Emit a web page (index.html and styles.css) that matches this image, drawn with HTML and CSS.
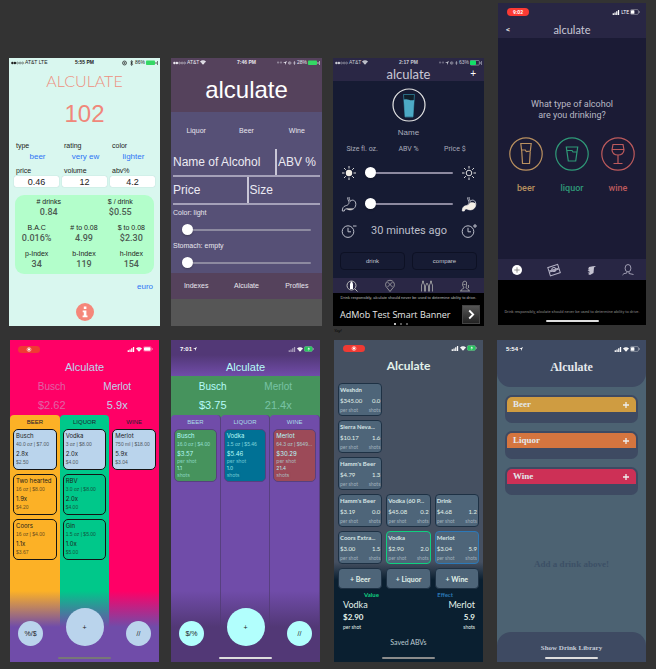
FILE: index.html
```
<!DOCTYPE html>
<html lang="en">
<head>
<meta charset="utf-8">
<title>Alculate design history</title>
<link rel="stylesheet" href="styles.css">
</head>
<body>
<svg class="defs" aria-hidden="true">
  <symbol id="dots" viewBox="0 0 14 4"><g fill="currentColor"><circle cx="1.5" cy="2" r="1.3"/><circle cx="4.2" cy="2" r="1.3"/></g><g fill="none" stroke="currentColor" stroke-width=".5"><circle cx="7" cy="2" r="1"/><circle cx="9.8" cy="2" r="1"/><circle cx="12.5" cy="2" r="1"/></g></symbol>
  <symbol id="wifi" viewBox="0 0 8 6"><path d="M0 1.8Q4-1.6 8 1.8L4 6Z" fill="currentColor"/><path d="M1.4 3Q4 .9 6.6 3" fill="none" stroke="#0004" stroke-width=".6"/></symbol>
  <symbol id="bars" viewBox="0 0 8 6"><path d="M0 4h1.5v2H0zM2.1 3h1.5v3H2.1zM4.2 1.5h1.5V6H4.2zM6.3 0h1.5v6H6.3z" fill="currentColor"/></symbol>
  <symbol id="misc" viewBox="0 0 12 6"><g fill="none" stroke="currentColor" stroke-width=".7"><circle cx="2.5" cy="3" r="2"/><circle cx="2.5" cy="3" r=".7"/><path d="M8.6 1.6l2 2.7-1 1.2v-5l1 1.2-2 2.7"/></g></symbol>
  <symbol id="battery-full" viewBox="0 0 12 6"><rect y=".5" width="9" height="4.6" rx=".8" fill="#34d864"/><path d="M10 2v2" stroke="currentColor" stroke-width=".7"/><path d="M11.5 1v4" stroke="currentColor" stroke-width=".6"/></symbol>
  <symbol id="battery-part" viewBox="0 0 12 6"><rect x=".3" y=".5" width="9" height="4.6" rx=".8" fill="none" stroke="currentColor" stroke-width=".5"/><rect y=".5" width="6" height="4.6" rx=".8" fill="#12e068"/><path d="M10.2 2v2M11.6 1v4" stroke="currentColor" stroke-width=".6"/></symbol>
  <symbol id="battery-white" viewBox="0 0 10 6"><rect x=".4" y=".6" width="8" height="4.8" rx="1.2" fill="none" stroke="currentColor" stroke-width=".4" opacity=".6"/><rect x="1" y="1.2" width="6.6" height="3.6" rx=".7" fill="currentColor"/><path d="M9.3 2.2v1.6" stroke="currentColor" stroke-width=".5"/></symbol>
  <symbol id="battery-half" viewBox="0 0 10 6"><rect x=".4" y=".6" width="8" height="4.8" rx="1.2" fill="none" stroke="currentColor" stroke-width=".5" opacity=".7"/><rect x="1" y="1.2" width="3.4" height="3.6" rx=".6" fill="currentColor"/><path d="M9.3 2.2v1.6" stroke="currentColor" stroke-width=".5"/></symbol>
  <symbol id="battery-green" viewBox="0 0 10 6"><rect x=".4" y=".6" width="8" height="4.8" rx="1.2" fill="#25c45c" stroke="#8fd7a8" stroke-width=".4"/><path d="M5.2 1L3.4 3.3h1.4L4.2 5l2-2.4H4.7z" fill="#fff"/><path d="M9.3 2.2v1.6" stroke="currentColor" stroke-width=".5"/></symbol>
  <symbol id="arrow" viewBox="0 0 5 5"><path d="M5 0L0 2.4h2.5V5z" fill="currentColor"/></symbol>
  <symbol id="record" viewBox="0 0 6 6"><circle cx="3" cy="3" r="2.4" fill="none" stroke="#fff" stroke-width=".6"/><circle cx="3" cy="3" r="1.4" fill="#fff"/></symbol>
  <symbol id="clock" viewBox="0 0 16 16"><circle cx="7" cy="8.6" r="5.8" fill="none" stroke="currentColor"/><path d="M7 4.8v4h3" fill="none" stroke="currentColor"/></symbol>
  <symbol id="stomach" viewBox="0 0 16 16"><path d="M8 1c0 2 1.200 3 1 4.500C11 3 15 4 14.800 8.500 14.500 13 10 15 6.500 13.200 4.500 12.500 3.600 13 3.300 15H1.300c0-3 1-4.600 3.200-5.200C8 9 8.300 7 7.800 5.500 7.400 4 6.500 3 6.500 1.500" stroke="currentColor" stroke-width=".9" stroke-linejoin="round"/></symbol>
</svg>

<main class="board">
  <!-- 1: first prototype -->
  <section class="phone short mint">
    <div class="status">
      <span><svg class="i14"><use href="#dots"/></svg> AT&amp;T LTE</span><b>5:55 PM</b>
      <span><svg class="i12"><use href="#misc"/></svg>86% <svg class="i12"><use href="#battery-full"/></svg></span>
    </div>
    <h1>ALCULATE</h1>
    <output class="score">102</output>
    <dl class="picks">
      <div><dt>type</dt><dd><button>beer</button></dd></div>
      <div><dt>rating</dt><dd><button>very ew</button></dd></div>
      <div><dt>color</dt><dd><button>lighter</button></dd></div>
    </dl>
    <form class="fields">
      <label for="price">price</label><label for="volume">volume</label><label for="abv">abv%</label>
      <input id="price" value="0.46"><input id="volume" value="12"><input id="abv" value="4.2">
    </form>
    <div class="results">
      <dl class="two"><div><dt># drinks</dt><dd>0.84</dd></div><div><dt>$ / drink</dt><dd>$0.55</dd></div></dl>
      <dl><div><dt>B.A.C</dt><dd>0.016%</dd></div><div><dt># to 0.08</dt><dd>4.99</dd></div><div><dt>$ to 0.08</dt><dd>$2.30</dd></div></dl>
      <dl><div><dt>p-Index</dt><dd>34</dd></div><div><dt>b-Index</dt><dd>119</dd></div><div><dt>h-Index</dt><dd>154</dd></div></dl>
    </div>
    <button class="euro">euro</button>
    <button class="info" aria-label="Information"><svg viewBox="0 0 18 18"><circle cx="9" cy="9" r="9" fill="#f5877a"/><path d="M7.800 3.500h2.600v2.600H7.800zM6.700 7.400h3.700v5h1.100v1.800H6.600v-1.800h1.200V9.200H6.700z" fill="#fff"/></svg></button>
  </section>

  <!-- 2: purple form -->
  <section class="phone short plum">
    <header>
      <div class="status">
        <span><svg class="i14"><use href="#dots"/></svg> AT&amp;T <svg class="i6"><use href="#wifi"/></svg></span><b>7:46 PM</b>
        <span><svg class="i5"><use href="#misc"/></svg><svg class="i4"><use href="#arrow"/></svg><svg class="i12 tight"><use href="#misc"/></svg>28% <svg class="i12"><use href="#battery-full"/></svg></span>
      </div>
      <h1>alculate</h1>
    </header>
    <nav class="thirds kinds"><button>Liquor</button><button>Beer</button><button>Wine</button></nav>
    <form>
      <div class="line name-abv"><input placeholder="Name of Alcohol" aria-label="Name of Alcohol"><input placeholder="ABV %" aria-label="ABV %"></div>
      <div class="line"><input placeholder="Price" aria-label="Price"><input placeholder="Size" aria-label="Size"></div>
      <label for="tone">Color: light</label>
      <input class="slider" id="tone" type="range" value="0">
      <label for="stomach-a">Stomach: empty</label>
      <input class="slider" id="stomach-a" type="range" value="0">
    </form>
    <nav class="thirds foot"><button>Indexes</button><button>Alculate</button><button>Profiles</button></nav>
  </section>

  <!-- 3: navy form with ad -->
  <figure class="with-caption">
    <section class="phone short navy">
      <header>
        <div class="status">
          <span><svg class="i14"><use href="#dots"/></svg> AT&amp;T <svg class="i6"><use href="#wifi"/></svg></span><b>2:17 PM</b>
          <span><svg class="i5"><use href="#misc"/></svg><svg class="i4"><use href="#arrow"/></svg><svg class="i12 tight"><use href="#misc"/></svg>63% <svg class="i12"><use href="#battery-part"/></svg></span>
        </div>
        <div class="bar"><h1>alculate</h1><button aria-label="Add">+</button></div>
      </header>
      <svg class="glass" viewBox="0 0 34 34"><circle cx="17" cy="17" r="16" fill="none" stroke="#e4e4e4" stroke-width="1.200"/><path d="M11.500 6.500h11L21 29h-8z" fill="#10202c" stroke="#2f7f98" stroke-width=".8"/><path d="M11.800 11.500q2.600-.8 5 .2t5.400.3L21 28.800h-8z" fill="#4daac6"/></svg>
      <input class="drink-name" placeholder="Name" aria-label="Name">
      <div class="thirds specs"><input placeholder="Size fl. oz." aria-label="Size fl. oz."><input placeholder="ABV %" aria-label="ABV %"><input placeholder="Price $" aria-label="Price $"></div>
      <div class="row sun">
        <svg viewBox="0 0 16 16"><circle cx="8" cy="8" r="3.200" fill="#f4efe6"/><path d="M8 1v2.500M8 12.500V15M1 8h2.500M12.500 8H15M3 3l1.800 1.800M11.200 11.200L13 13M3 13l1.800-1.800M11.200 4.800L13 3" stroke="#ddd"/></svg>
        <input class="slider" type="range" value="0" aria-label="Color">
        <svg viewBox="0 0 16 16"><circle cx="8" cy="8" r="2.800" fill="none" stroke="#ddd"/><path d="M8 1v2.500M8 12.500V15M1 8h2.500M12.500 8H15M3 3l1.800 1.800M11.200 11.200L13 13M3 13l1.800-1.800M11.200 4.800L13 3" stroke="#ddd"/></svg>
      </div>
      <div class="row belly">
        <svg viewBox="0 0 16 16" fill="none"><use href="#stomach"/><path d="M5 12.500h7.500Q9 15 5 12.500" fill="#f4efe6"/></svg>
        <input class="slider" type="range" value="0" aria-label="Stomach">
        <svg viewBox="0 0 16 16"><use href="#stomach" fill="none"/><path d="M9 6.500q3-1 5.700 1Q15 13 10 14q-2 .300-4.200-1Q3.600 12.500 3.300 15h-2c0-3 1-4.800 3.200-5.200 2.200-.3 3.600-1.500 4.500-3.300" fill="#f4efe6"/></svg>
      </div>
      <div class="row time">
        <button aria-label="Earlier"><svg viewBox="0 0 16 16"><use href="#clock"/><path d="M12 3h3.500" stroke="currentColor"/></svg></button>
        <span>30 minutes ago</span>
        <button aria-label="Later"><svg viewBox="0 0 16 16"><use href="#clock"/><path d="M12 3h4M14 1v4" stroke="currentColor"/></svg></button>
      </div>
      <div class="actions"><button>drink</button><button>compare</button></div>
      <nav class="tabs">
        <button aria-label="Calculate"><svg viewBox="0 0 12 12"><circle cx="5.500" cy="5.500" r="4.500" fill="none" stroke="#bbb"/><path d="M5 1.500h1L7 4v5H4V4z" fill="#fff"/><path d="M9 9l2.500 2.500" stroke="#bbb"/></svg></button>
        <button aria-label="Places"><svg viewBox="0 0 12 12" fill="none" stroke="#aaa" stroke-width=".8"><path d="M6 11.500L2 6.500a4.400 4.400 0 1 1 8 0z"/><path d="M3.500 2l5 5M8.500 2l-5 5"/></svg></button>
        <button aria-label="Drinks"><svg viewBox="0 0 12 12" fill="none" stroke="#aaa" stroke-width=".8"><path d="M.5 11.500V5l1-2V1h1v2l1 2v6.500M4.500 11.500V6L6 3l1.500 3v5.500M8.500 11.500V5l1-2V1h1v2l1 2v6.500"/></svg></button>
        <button aria-label="Profile"><svg viewBox="0 0 12 12" fill="none" stroke="#aaa" stroke-width=".8"><path d="M1 11h10M2 11c0-2 2-2 3-3L3.500 5 4 2l2-1 1.500 1v3L7 8c1 1 3 1 3 3M9.500 5v3M4.500 4.500h2"/></svg></button>
      </nav>
      <footer>
        <small>Drink responsibly, alculate should never be used to determine ability to drive.</small>
        <div class="ad"><span>AdMob Test Smart Banner</span><button aria-label="Open"><svg viewBox="0 0 18 19"><path d="M7 5l4.500 4.500L7 14" fill="none" stroke="#fff" stroke-width="2"/></svg></button></div>
        <div class="pager"><i></i><i></i><i></i></div>
      </footer>
    </section>
    <figcaption>Yay!</figcaption>
  </figure>

  <!-- 4: drink type chooser -->
  <section class="phone tall picker">
    <header>
      <div class="notch"><span class="pill">9:02</span><span class="signals"><svg class="i8"><use href="#bars"/></svg>LTE<svg class="i10"><use href="#battery-half"/></svg></span></div>
      <div class="bar"><button aria-label="Back">&lt;</button><h1>alculate</h1></div>
    </header>
    <p class="ask">What type of alcohol<br>are you drinking?</p>
    <div class="choices">
      <button class="c-beer"><svg viewBox="0 0 34 34"><circle cx="17" cy="17" r="16.200"/><path d="M11.800 6.500h10.400l-1 8.500-.7 11.500h-7L12.800 15zM12.300 13h4l1 1.500 4.500-.5"/></svg>beer</button>
      <button class="c-liquor"><svg viewBox="0 0 34 34"><circle cx="17" cy="17" r="16.200"/><path d="M11.300 10h11.400l-2 14h-7.400zM12 13.500h5l1 1.500h4"/></svg>liquor</button>
      <button class="c-wine"><svg viewBox="0 0 34 34"><circle cx="17" cy="17" r="16.200"/><path d="M12 7.500h10l1 5.500q-.5 5-6 5t-6-5zM11.500 12.500h11.200M17 18v8M12.500 26.500h9"/></svg>wine</button>
    </div>
    <nav class="tabs">
      <button aria-label="Add"><svg viewBox="0 0 12 12"><circle cx="6" cy="6" r="5" fill="#fff"/><path d="M6 3.300v5.400M3.300 6h5.400" stroke="#777" stroke-width=".8"/></svg></button>
      <button aria-label="Value"><svg viewBox="0 0 12 12" fill="none" stroke="#b5b3c6"><g transform="rotate(-18 6 6)"><rect x=".8" y="1.800" width="10.400" height="3.800"/><rect x=".8" y="6.600" width="10.400" height="3.800"/><circle cx="6" cy="5.500" r="2"/></g></svg></button>
      <button aria-label="Effect"><svg viewBox="0 0 12 12"><path d="M4 3q4-1 7-1L9 3.500 8.500 9 5 11l-2-1 2-1.500H2.500L5 7H2.500L4.500 5.500H3z" fill="#c4c2d0"/></svg></button>
      <button aria-label="Profile"><svg viewBox="0 0 12 12" fill="none" stroke="#a9a7bb" stroke-width=".9"><ellipse cx="6" cy="4.200" rx="2.900" ry="3.700"/><path d="M.5 11q1-2 4-1.800L5 7.800M7 8v1.500l4.500 1"/></svg></button>
    </nav>
    <footer><small>Drink responsibly, alculate should never be used to determine ability to drive.</small><i class="home"></i></footer>
  </section>

  <!-- 5: colour columns -->
  <section class="phone tall lanes pink">
    <header>
      <div class="notch"><span class="pill"><svg class="i6"><use href="#record"/></svg></span><span class="signals"><svg class="i8"><use href="#bars"/></svg><svg class="i6"><use href="#wifi"/></svg><svg class="i10"><use href="#battery-white"/></svg></span></div>
      <h1>Alculate</h1>
    </header>
    <div class="versus"><div class="dim"><span>Busch</span><b>$2.62</b></div><div><span>Merlot</span><b>5.9x</b></div></div>
    <div class="columns">
      <section class="beer"><h2>BEER</h2>
        <article class="best"><h3>Busch</h3><small>40.0 oz | $7.00</small><b>2.8x</b><small>$2.50</small></article>
        <article><h3>Two hearted</h3><small>16 oz | $8.00</small><b>1.9x</b><small>$4.20</small></article>
        <article><h3>Coors</h3><small>16 oz | $4.00</small><b>1.1x</b><small>$3.67</small></article>
      </section>
      <section class="liquor"><h2>LIQUOR</h2>
        <article class="best"><h3>Vodka</h3><small>3 oz | $8.00</small><b>2.0x</b><small>$4.00</small></article>
        <article><h3>RBV</h3><small>3.0 oz | $8.00</small><b>2.0x</b><small>$4.00</small></article>
        <article><h3>Gin</h3><small>1.5 oz | $5.00</small><b>1.0x</b><small>$5.00</small></article>
      </section>
      <section class="wine"><h2>WINE</h2>
        <article class="best"><h3>Merlot</h3><small>750 ml | $18.00</small><b>5.9x</b><small>$3.04</small></article>
      </section>
    </div>
    <div class="dock"><div class="rounds"><button>%/$</button><button class="big">+</button><button>//</button></div><i class="home"></i></div>
  </section>

  <!-- 6: muted columns -->
  <section class="phone tall lanes violet">
    <header>
      <div class="notch"><span class="hour">7:01 <svg class="i4"><use href="#arrow"/></svg></span><span class="signals"><svg class="i8 faint"><use href="#bars"/></svg><svg class="i6"><use href="#wifi"/></svg><svg class="i10"><use href="#battery-green"/></svg></span></div>
      <h1>Alculate</h1>
    </header>
    <div class="versus"><div><span>Busch</span><b>$3.75</b></div><div class="dim"><span>Merlot</span><b>21.4x</b></div></div>
    <div class="columns">
      <section class="beer"><h2>BEER</h2>
        <article><h3>Busch</h3><small>16.0 oz | $4.00</small><b>$3.57</b><em>per shot</em><em class="n">1.1</em><em>shots</em></article>
      </section>
      <section class="liquor"><h2>LIQUOR</h2>
        <article><h3>Vodka</h3><small>1.5 oz | $5.46</small><b>$5.46</b><em>per shot</em><em class="n">1.0</em><em>shots</em></article>
      </section>
      <section class="wine"><h2>WINE</h2>
        <article><h3>Merlot</h3><small>64.3 oz | $649...</small><b>$30.29</b><em>per shot</em><em class="n">21.4</em><em>shots</em></article>
      </section>
    </div>
    <div class="dock"><div class="rounds"><button>$/%</button><button class="big">+</button><button>//</button></div><i class="home"></i></div>
  </section>

  <!-- 7: slate grid -->
  <section class="phone tall slate">
    <header>
      <div class="notch"><span class="pill"><svg class="i6"><use href="#record"/></svg></span><span class="signals"><svg class="i8"><use href="#bars"/></svg><svg class="i6"><use href="#wifi"/></svg><svg class="i10"><use href="#battery-green"/></svg></span></div>
      <h1>Alculate</h1>
    </header>
    <div class="cards">
      <article class="first"><h3>Weshdn</h3><p><b>$345.00</b><b>0.0</b></p><p><small>per shot</small><small>shots</small></p></article>
      <article class="first"><h3>Sierra Neva...</h3><p><b>$10.17</b><b>1.6</b></p><p><small>per shot</small><small>shots</small></p></article>
      <article class="first"><h3>Hamm's Beer</h3><p><b>$4.79</b><b>1.3</b></p><p><small>per shot</small><small>shots</small></p></article>
      <article class="first"><h3>Hamm's Beer</h3><p><b>$3.19</b><b>0.0</b></p><p><small>per shot</small><small>shots</small></p></article>
      <article><h3>Vodka (60 P...</h3><p><b>$45.08</b><b>0.2</b></p><p><small>per shot</small><small>shots</small></p></article>
      <article><h3>Drink</h3><p><b>$4.68</b><b>1.2</b></p><p><small>per shot</small><small>shots</small></p></article>
      <article class="first"><h3>Coors Extra...</h3><p><b>$3.00</b><b>1.5</b></p><p><small>per shot</small><small>shots</small></p></article>
      <article class="value"><h3>Vodka</h3><p><b>$2.90</b><b>2.0</b></p><p><small>per shot</small><small>shots</small></p></article>
      <article class="effect"><h3>Merlot</h3><p><b>$3.04</b><b>5.9</b></p><p><small>per shot</small><small>shots</small></p></article>
      <button>+ Beer</button><button>+ Liquor</button><button>+ Wine</button>
    </div>
    <div class="winners">
      <div><h4>Value</h4><span>Vodka</span><b>$2.90</b><small>per shot</small></div>
      <div class="right"><h4>Effect</h4><span>Merlot</span><b>5.9</b><small>shots</small></div>
    </div>
    <button class="saved">Saved ABVs</button>
    <i class="home"></i>
  </section>

  <!-- 8: slab accordion -->
  <section class="phone tall slab">
    <header>
      <div class="notch"><span class="hour">5:54 <svg class="i4"><use href="#arrow"/></svg></span><span class="signals"><svg class="i8"><use href="#bars"/></svg><svg class="i6"><use href="#wifi"/></svg><svg class="i10"><use href="#battery-half"/></svg></span></div>
      <h1>Alculate</h1>
    </header>
    <div class="drawers">
      <div class="drawer"><button class="d-beer">Beer<svg viewBox="0 0 8 8"><path d="M4 1v6M1 4h6"/></svg></button></div>
      <div class="drawer"><button class="d-liquor">Liquor<svg viewBox="0 0 8 8"><path d="M4 1v6M1 4h6"/></svg></button></div>
      <div class="drawer"><button class="d-wine">Wine<svg viewBox="0 0 8 8"><path d="M4 1v6M1 4h6"/></svg></button></div>
    </div>
    <p class="empty">Add a drink above!</p>
    <footer><button>Show Drink Library</button><i class="home"></i></footer>
  </section>
</main>
</body>
</html>
```
FILE: styles.css
```
* { box-sizing: border-box; }
body { margin: 0; background: #333; font-family: "Liberation Sans", Arial, sans-serif; }
h1, h2, h3, h4, p, dl, dd, figure { margin: 0; font-weight: 400; }
button, input { margin: 0; padding: 0; border: 0; background: none; color: inherit; font: inherit; min-width: 0; border-radius: 0; }
input { width: 100%; }
svg { display: block; flex: none; overflow: visible; }
.defs { width: 0; height: 0; position: absolute; }
small, b, em { font-weight: 400; font-style: normal; }

.board {
  display: grid;
  grid-template-columns: 162fr 162fr 164fr 149fr;
  align-items: end;
  padding: 3px 10px 7px 9px;
}
.phone { display: flex; flex-direction: column; position: relative; overflow: hidden; }
.short { min-height: 268px; margin: 0 11px 14px 0; }
.tall { min-height: 322px; }

/* status bars */
.status { display: grid; grid-template-columns: 1fr auto 1fr; align-items: center; height: 9px; padding: 0 2px; font-size: 5px; line-height: 9px; }
.status span { display: flex; align-items: center; gap: 1px; }
.status span:last-child { justify-content: flex-end; }
.status b { font-weight: 700; }
.i4 { width: 4px; height: 4px; }
.i5 { width: 5px; height: 5px; }
.i6 { width: 6px; height: 5px; }
.i8 { width: 8px; height: 5px; }
.i10 { width: 10px; height: 6px; }
.i12 { width: 12px; height: 6px; }
.i14 { width: 13px; height: 4px; }
.tight { width: 8px; }
.faint { opacity: .5; }
.notch { display: flex; justify-content: space-between; align-items: center; height: 18px; padding: 0 6px 0 9px; color: #fff; font-size: 5px; }
.pill { display: flex; align-items: center; justify-content: center; width: 22px; height: 8px; border-radius: 4px; background: #ef3a33; font-weight: 700; }
.signals { display: flex; align-items: center; gap: 1px; }
.hour { display: flex; align-items: center; gap: 1px; font-size: 6px; font-weight: 700; }
.home { display: block; width: 53px; height: 2px; margin: 0 auto; border-radius: 1px; background: #ddd; }

.slider { appearance: none; display: block; height: 12px; }
.slider::-webkit-slider-runnable-track { height: 2px; background: #8d8aa0; border-radius: 1px; }
.slider::-webkit-slider-thumb { appearance: none; width: 11px; height: 11px; margin-top: -5px; border-radius: 50%; background: #fff; box-shadow: 0 1px 2px #0004; }
.thirds { display: grid; grid-template-columns: repeat(3, 1fr); text-align: center; }

/* 1 */
.mint { background: #d9f7ef; color: #222; }
.mint h1 { margin-top: 4px; font: 300 16px/20px Lato, sans-serif; text-align: center; color: #ee8f81; }
.score { display: block; margin-top: 9px; font-size: 24px; line-height: 28px; text-align: center; color: #f0877a; }
.picks { display: grid; grid-template-columns: repeat(3, 1fr); gap: 3px; margin-top: 13px; padding: 0 5px; }
.picks dt, .fields label { padding-left: 2px; font-size: 7px; line-height: 10px; }
.picks dd { padding-left: 2px; font-size: 8px; line-height: 12px; text-align: center; color: #2d74f5; }
.picks button { display: block; width: 100%; }
.fields { display: grid; grid-template-columns: repeat(3, 1fr); column-gap: 3px; margin-top: 3px; padding: 0 5px; }
.fields input { height: 11px; border-radius: 2px; background: #fff; font-size: 9px; text-align: center; box-shadow: 0 0 1px #9bb; }
.results { display: grid; gap: 6px; margin: 8px 6px 0; padding: 2px 0 5px; border-radius: 9px; background: #b3fecb; text-align: center; }
.results dl { display: grid; grid-template-columns: repeat(3, 1fr); padding-right: 1px; margin: 0 -2px; }
.results .two { grid-template-columns: repeat(2, 1fr); padding: 0; }
.results dt { font-size: 7px; line-height: 10px; }
.results dd { font: 500 9px/10px Roboto, sans-serif; color: #4d5c53; }
.euro { align-self: flex-end; margin: 8px 7px 0 0; font-size: 8px; line-height: 10px; color: #2d74f5; }
.info { width: 18px; height: 18px; margin: 11px auto 0; }

/* 2 */
.plum { background: #565656; color: #e8e6ee; }
.plum header { background: #55425c; padding-bottom: 8px; }
.plum h1 { margin-top: 9px; font-size: 24px; line-height: 28px; text-align: center; color: #fff; }
.plum .kinds, .plum form { background: #565076; }
.kinds { padding: 13px 0; font-size: 7px; line-height: 11px; }
.plum form { padding: 0 2px 4px; font-size: 7px; }
.line { display: grid; grid-template-columns: 1fr 1fr; height: 28px; border-bottom: 2px solid #a5a1b9; font-size: 12px; }
.line input::placeholder { color: #eceaf2; opacity: 1; }
.line input + input { border-left: 2px solid #c9c6d6; padding-left: 1px; }
.name-abv { grid-template-columns: 102fr 45fr; }
.plum label { display: block; line-height: 10px; margin-top: 3px; }
.plum .slider { width: calc(100% - 18px); margin: 6px 9px 0; }
.plum .slider + label { margin-top: 5px; }
.plum .foot { background: #55425c; padding: 7px 0; font-size: 7px; line-height: 12px; }

/* 3 */
.with-caption .phone { margin: 0 13px 0 0; }
figcaption { height: 14px; padding: 2px 1px; font: italic 4px/6px "Liberation Sans", sans-serif; color: #000; }
.navy { background: #161b33; color: #c6c8d2; }
.navy header, .navy .tabs { background: #2a2745; }
.bar { display: grid; grid-template-columns: 1fr auto 1fr; align-items: center; }
.bar h1 { grid-column: 2; grid-row: 1; font-family: Lato, sans-serif; font-size: 13px; line-height: 14px; color: #c9c8d6; }
.navy .bar button { justify-self: end; padding-right: 8px; font-size: 10px; line-height: 14px; grid-row: 1; grid-column: 3; color: #fff; }
.glass { width: 34px; height: 34px; margin: 7px auto 0; }
.navy input::placeholder { color: #a9abba; opacity: 1; }
.drink-name { margin-top: 5px; height: 11px; font-size: 8px; text-align: center; }
.specs { margin-top: 6px; padding: 0 6px; font: 7px/10px Roboto, sans-serif; }
.specs input { height: 10px; text-align: center; }
.row { display: flex; align-items: center; gap: 8px; height: 17px; padding: 0 7px 0 8px; }
.row svg { width: 16px; height: 16px; }
.row .slider { flex: 1; }
.sun { margin-top: 10px; }
.belly { margin-top: 14px; }
.time { margin-top: 10px; justify-content: space-between; font: 11px/17px Roboto, sans-serif; color: #bcbfca; }
.actions { display: grid; grid-template-columns: 1fr 1fr; gap: 7px; margin-top: 13px; padding: 0 7px; font-size: 6px; }
.actions button { height: 18px; border: 1px solid #0d1124; border-radius: 4px; }
.tabs { display: flex; justify-content: space-around; align-items: center; height: 15px; }
.tabs svg { width: 12px; height: 12px; }
.navy .tabs { margin-top: 8px; }
.navy footer { flex: 1; background: #000; padding: 2px 4px 1px; }
footer small { display: block; font-size: 4px; line-height: 6px; text-align: center; color: #bbb; white-space: nowrap; }
.ad { display: flex; align-items: center; justify-content: space-between; margin-top: 4px; padding-left: 3px; font: 9px/19px "Open Sans", sans-serif; color: #e8e8e8; white-space: nowrap; }
.ad button { background: linear-gradient(#555, #222); border: 1px solid #444; }
.ad svg { width: 16px; height: 17px; }
.pager { display: flex; gap: 4px; justify-content: center; margin-right: 15px; margin-top: -1px; }
.pager i { width: 2px; height: 2px; border-radius: 50%; background: #777; }
.pager i:first-child { background: #fff; }

/* 4 */
.picker { margin: 0 0 15px 1px; background: #1b1b35; font-family: Roboto, sans-serif; }
.picker header, .picker .tabs { background: #282644; }
.picker .pill { background: #fb3a34; }
.picker .bar { height: 17px; color: #ddd; }
.picker .bar h1 { font-size: 11px; }
.picker .bar button { justify-self: start; padding-left: 8px; font-size: 8px; font-weight: 700; grid-row: 1; }
.ask { margin-top: 61px; font-size: 9px; line-height: 11px; text-align: center; color: #b9b9c4; }
.choices { display: flex; justify-content: center; gap: 12px; flex: 1; align-items: flex-start; margin-top: 16px; font-size: 9px; line-height: 12px; font-weight: 500; }
.choices svg { width: 34px; height: 34px; margin-bottom: 11px; fill: none; stroke: currentColor; stroke-width: 1.2; }
.c-beer { color: #b9905f; }
.c-liquor { color: #2f9a78; }
.c-wine { color: #bd5a5c; }
.picker .tabs { height: 21px; }
.picker footer { background: #000; padding: 29px 2px 3px; }
.picker footer small { color: #888; }
.picker .home { margin-top: 5px; }

/* 5 and 6 */
.lanes { align-self: start; }
.pink { margin: 0 12px 0 1px; background: #ff0066; --ink: #bcd5ec; --round: #bad4ec; --dock: #704ca9; }
.violet { margin-right: 13px; background: #46935d; --ink: #b5fbf8; --round: #b2fffd; --dock: #523876; }
.lanes header { color: var(--ink); }
.lanes h1 { font-size: 11px; line-height: 18px; text-align: center; }
.pink .notch { padding-left: 8px; }
.pink .pill { height: 7px; }
.violet header { background: linear-gradient(#523876 15px, #704ca9); }
.versus { display: grid; grid-template-columns: 1fr 1fr; padding: 2px 9px 1px; text-align: center; color: var(--ink); font-size: 10px; line-height: 18px; }
.versus span, .versus b { display: block; }
.versus b { font-size: 11px; }
.dim { opacity: .45; }
.columns { flex: 1; display: grid; grid-template-columns: repeat(3, 1fr); }
.columns section { padding: 2px 3px; border-radius: 4px 4px 0 0; }
.columns h2 { font-size: 6px; line-height: 10px; margin: 0 0 2px; text-align: center; color: #202030; }
.columns article { border: 1px solid #141414; border-radius: 5px; padding: 1px 2px 2px; margin-bottom: 4px; font-family: Inter, sans-serif; font-size: 6px; line-height: 9px; color: #1d1d1d; white-space: nowrap; overflow: hidden; }
.columns article > * { display: block; font-size: 6px; }
.columns article small { font-size: 5px; line-height: 9px; opacity: .7; font-family: "Liberation Sans", sans-serif; }
.columns article em { font-size: 5px; line-height: 7px; opacity: .6; }
.columns article em.n { opacity: .9; }
.pink .beer { background: #fcb126; }
.pink .liquor { background: #00c88a; }
.pink .best { background: #bad4ec; }
.violet .columns section { background: #704ca9; border-right: 1px solid #57407f; }
.violet .columns h2 { color: #a9dfe8; }
.violet .columns article { border-color: #57407f; color: #b5fbf8; }
.violet .beer article { background: #46935d; }
.violet .liquor article { background: #007195; }
.violet .wine article { background: #9c4a58; }
.dock { position: absolute; left: 0; right: 0; bottom: 0; padding: 17px 8px 3px; background: linear-gradient(transparent, var(--dock) 36px); }
.rounds { display: flex; justify-content: space-between; align-items: flex-end; font-size: 7px; color: #222; }
.rounds button { width: 25px; height: 25px; border-radius: 50%; background: var(--round); }
.rounds .big { width: 38px; height: 38px; }
.dock .home { margin-top: 11px; }
.pink .home { background: #777; }

/* 7 */
.slate { align-self: start; margin: 0 14px 0 1px; background: linear-gradient(#455061 222px, #0a1f30 240px); color: #e2f2ea; font-family: Lato, sans-serif; }
.slate .notch { height: 16px; }
.slate .pill { height: 7px; }
.slate h1 { font-size: 12px; font-weight: 700; line-height: 20px; text-align: center; }
.cards { display: grid; grid-template-columns: repeat(3, 1fr); gap: 4px; padding: 7px 4px 0; }
.first { grid-column: 1; }
.cards article { height: 33px; padding: 1px; border: 1px solid #1e3144; border-radius: 4px; background: #4e6579; overflow: hidden; }
.cards h3 { font-size: 6px; line-height: 10px; font-weight: 700; white-space: nowrap; color: #d5e4e4; }
.cards p { display: flex; justify-content: space-between; line-height: 8px; font-size: 6px; }
.cards p b { line-height: 11px; }
.cards p small { font-size: 5px; color: #a0b1bc; }
.cards .value { border-color: #10d080; }
.cards .effect { border-color: #2c79b8; }
.cards button { height: 21px; border: 1px solid #1e3144; border-radius: 4px; background: #4e6579; font-size: 7px; font-weight: 700; }
.winners { display: flex; justify-content: space-between; padding: 2px 8px 0 9px; }
.winners span, .winners b, .winners small { display: block; font-size: 9px; line-height: 12px; }
.winners b { font-weight: 700; font-size: 8px; }
.winners small { font-size: 5px; line-height: 8px; }
.winners h4 { font-size: 6px; line-height: 8px; font-weight: 700; padding-left: 21px; color: #10d080; }
.winners .right { text-align: right; }
.winners .right h4 { padding: 0 22px 0 0; color: #2c79b8; }
.saved { margin-top: 4px; font-size: 7px; line-height: 14px; color: #bccbd0; }
.slate > .home { margin: auto auto 3px; background: #8b8b8b; }

/* 8 */
.slab { align-self: start; background: #4c6272; font-family: "Liberation Serif", serif; font-weight: 700; color: #e4e8ec; }
.slab header { background: #3e4a62; border-radius: 0 0 14px 14px; padding-bottom: 11px; }
.slab .hour, .slab .signals { font-family: "Liberation Sans", sans-serif; }
.slab h1 { font-size: 12px; font-weight: 700; line-height: 18px; text-align: center; }
.drawers { display: grid; gap: 8px; padding: 8px; }
.drawer { padding: 2px 2px 11px; border-radius: 7px; background: #3e4a62; }
.drawer button { display: flex; width: 100%; justify-content: space-between; align-items: center; padding: 0 6px; border-radius: 5px 5px 0 0; font-size: 9px; line-height: 15px; }
.drawer svg { width: 8px; height: 8px; stroke: #eee; stroke-width: 1.3; }
.d-beer { background: #cf9c41; }
.d-liquor { background: #d5753f; }
.d-wine { background: #cd3056; }
.empty { flex: 1; display: flex; align-items: center; justify-content: center; padding-bottom: 8px; font-size: 9px; font-weight: 700; color: #3c5066; }
.slab footer { padding: 4px 0 3px; border-radius: 14px 14px 0 0; background: #3e4a62; text-align: center; }
.slab footer button { font-size: 7px; line-height: 12px; color: #c5ccd8; }
.slab .home { margin-top: 3px; }
```
